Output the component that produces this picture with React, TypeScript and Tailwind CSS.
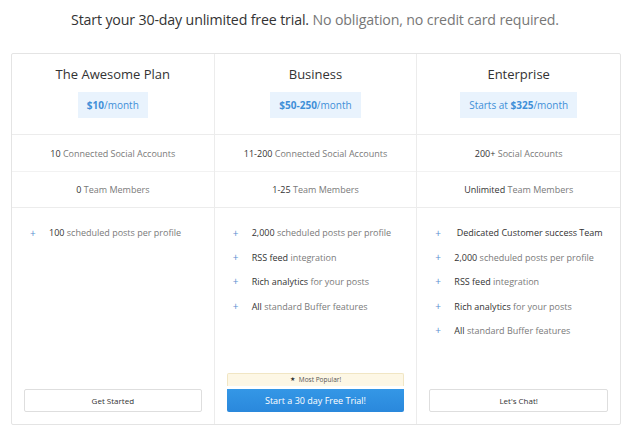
const plans = [
  {
    name: 'The Awesome Plan',
    price: (
      <span>
        <span className="font-bold">$10</span>/month
      </span>
    ),
    accounts: ['10', ' Connected Social Accounts'],
    members: ['0', ' Team Members'],
    features: [['100', ' scheduled posts per profile']],
    cta: 'Get Started',
    primary: false,
  },
  {
    name: 'Business',
    price: (
      <span>
        <span className="font-bold">$50-250</span>/month
      </span>
    ),
    accounts: ['11-200', ' Connected Social Accounts'],
    members: ['1-25', ' Team Members'],
    features: [
      ['2,000', ' scheduled posts per profile'],
      ['RSS feed', ' integration'],
      ['Rich analytics', ' for your posts'],
      ['All', ' standard Buffer features'],
    ],
    cta: 'Start a 30 day Free Trial!',
    primary: true,
  },
  {
    name: 'Enterprise',
    price: (
      <span>
        Starts at <span className="font-bold">$325</span>/month
      </span>
    ),
    accounts: ['200+', ' Social Accounts'],
    members: ['Unlimited', ' Team Members'],
    features: [
      ['\u00a0Dedicated Customer success Team', ''],
      ['2,000', ' scheduled posts per profile'],
      ['RSS feed', ' integration'],
      ['Rich analytics', ' for your posts'],
      ['All', ' standard Buffer features'],
    ],
    cta: "Let's Chat!",
    primary: false,
  },
]

function Split({ parts }: { parts: string[] }) {
  return (
    <span>
      <span className="text-[#333]">{parts[0]}</span>
      <span className="text-[#7a7a7a]">{parts[1]}</span>
    </span>
  )
}

export default function App() {
  return (
    <div
      className="w-[630px] h-[429px] bg-white overflow-hidden"
      style={{ fontFamily: '"Open Sans", "Liberation Sans", sans-serif' }}
    >
      <p className="pt-[10px] h-[53px] text-center text-[14.2px] leading-[20px] tracking-[-0.15px]">
        <span className="text-[#333]">Start your 30-day unlimited free trial.</span>
        <span className="text-[#777]"> No obligation, no credit card required.</span>
      </p>

      <div className="mx-[11px] w-[610px] h-[372px] grid grid-cols-3 border border-[#e4e4e4] rounded-[2px]">
        {plans.map((plan, i) => (
          <div
            key={plan.name}
            className={`flex flex-col ${i < 2 ? 'border-r border-[#ececec]' : ''}`}
          >
            {/* Header */}
            <div className="h-[81px] flex flex-col items-center border-b border-[#ececec] pt-[10px]">
              <h2 className="text-[13px] leading-[20px] text-[#333]">{plan.name}</h2>
              <div className="mt-[8px] h-[26px] px-[9px] flex items-center bg-[#e9f3fd] text-[#3f8fd8] text-[10px]">
                {plan.price}
              </div>
            </div>

            <div className="h-[37px] flex items-center justify-center border-b border-[#f2f2f2] text-[9px] pt-[1px]">
              <Split parts={plan.accounts} />
            </div>
            <div className="h-[36px] flex items-center justify-center border-b border-[#ececec] text-[9px]">
              <Split parts={plan.members} />
            </div>

            {/* Features */}
            <ul className="pt-[13px] text-[9px]">
              {plan.features.map((f, k) => (
                <li key={k} className="flex items-center h-[24.4px] pl-[18px]">
                  <span className="w-[19px] text-[#5b8fd0] text-[10px]">+</span>
                  <Split parts={f} />
                </li>
              ))}
            </ul>

            {/* CTA */}
            <div className="mt-auto px-[12px] pb-[12px]">
              {plan.primary ? (
                <div>
                  <div className="h-[13px] flex items-center justify-center gap-[4px] bg-[#fdf7e5] border border-b-0 border-[#f1e6c4] rounded-t-[2px] text-[6.5px] text-[#555]">
                    <span className="text-[6px] text-[#333]">★</span>
                    <span>Most Popular!</span>
                  </div>
                  <button className="w-full h-[23px] bg-gradient-to-b from-[#3497e6] to-[#2a88dc] text-white text-[9px] rounded-b-[2px]">
                    {plan.cta}
                  </button>
                </div>
              ) : (
                <button className="w-full h-[23px] bg-white border border-[#dedede] rounded-[2px] text-[#333] text-[8px]">
                  {plan.cta}
                </button>
              )}
            </div>
          </div>
        ))}
      </div>
    </div>
  )
}
